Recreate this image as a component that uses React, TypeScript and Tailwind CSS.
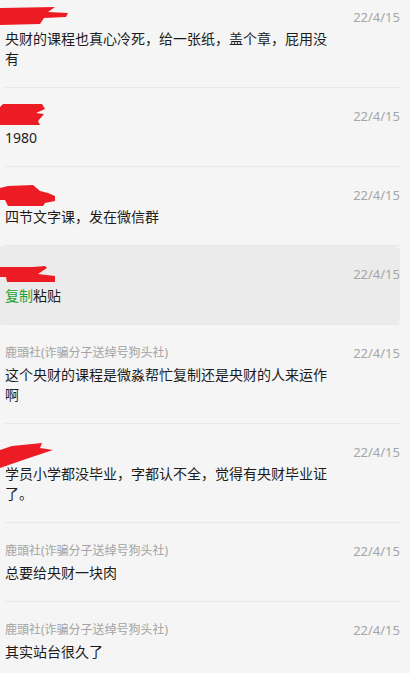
import { ReactNode } from "react";

type Comment = {
  name?: string;
  scribble?: string;
  text: ReactNode;
  date: string;
  active?: boolean;
};

const NAME = "鹿頭社(诈骗分子送绰号狗头社)";

// red marker scribbles that hide the user names (coords: page x, row top = 6)
const SCRIBBLES = {
  a: "0,5 55,4 48,9 68,10 66,14 44,15 40,21 0,22",
  b: "3,2 42,2 45,7 36,11 44,12 38,19 40,23 0,23 0,5",
  c: "0,7 8,5 33,4 40,10 48,12 55,15 55,20 45,22 43,25 8,25 5,19 0,19",
  d: "0,7 33,7 45,6 47,8 38,14 55,16 55,22 7,22 6,17 0,17",
  e: "0,12 12,8 42,5 40,10 53,12 26,21 0,30",
};

const comments: Comment[] = [
  {
    scribble: SCRIBBLES.a,
    text: "央财的课程也真心冷死，给一张纸，盖个章，屁用没有",
    date: "22/4/15",
  },
  { scribble: SCRIBBLES.b, text: "1980", date: "22/4/15" },
  { scribble: SCRIBBLES.c, text: "四节文字课，发在微信群", date: "22/4/15" },
  {
    scribble: SCRIBBLES.d,
    text: (
      <>
        <span className="text-[#1fa334]">复制</span>粘贴
      </>
    ),
    date: "22/4/15",
    active: true,
  },
  {
    name: NAME,
    text: "这个央财的课程是微淼帮忙复制还是央财的人来运作啊",
    date: "22/4/15",
  },
  {
    scribble: SCRIBBLES.e,
    text: "学员小学都没毕业，字都认不全，觉得有央财毕业证了。",
    date: "22/4/15",
  },
  { name: NAME, text: "总要给央财一块肉", date: "22/4/15" },
  { name: NAME, text: "其实站台很久了", date: "22/4/15" },
];

function Scribble({ points }: { points: string }) {
  return (
    <svg
      className="absolute left-[-5px] top-[-6px]"
      width="80"
      height="40"
      viewBox="0 0 80 40"
    >
      <polygon points={points} fill="#ed1c24" />
    </svg>
  );
}

function CommentItem({ c, first }: { c: Comment; first: boolean }) {
  return (
    <div
      className={`w-[400px] pl-[5px] rounded-r-md ${c.active ? "bg-[#ebebeb]" : ""}`}
    >
      <div
        className={`border-b border-[#e8e8e8] pb-[18px] ${first ? "pt-[9px]" : "pt-5"}`}
      >
        <div className="relative flex items-center justify-between h-4">
          {c.scribble ? (
            <Scribble points={c.scribble} />
          ) : (
            <span className="text-[12px] leading-4 text-[#a3a3a3]">{c.name}</span>
          )}
          <span className="text-[13px] leading-4 text-[#a6a6a6] ml-auto">{c.date}</span>
        </div>
        <div className="mt-1 w-[330px] text-[14px] leading-5 text-[#1c1c1c] break-all">
          {c.text}
        </div>
      </div>
    </div>
  );
}

export default function App() {
  return (
    <div
      className="min-h-screen bg-[#f5f5f5] overflow-hidden"
      style={{ fontFamily: '"Noto Sans", "Noto Sans CJK SC", sans-serif' }}
    >
      {comments.map((c, i) => (
        <CommentItem key={i} c={c} first={i === 0} />
      ))}
    </div>
  );
}
